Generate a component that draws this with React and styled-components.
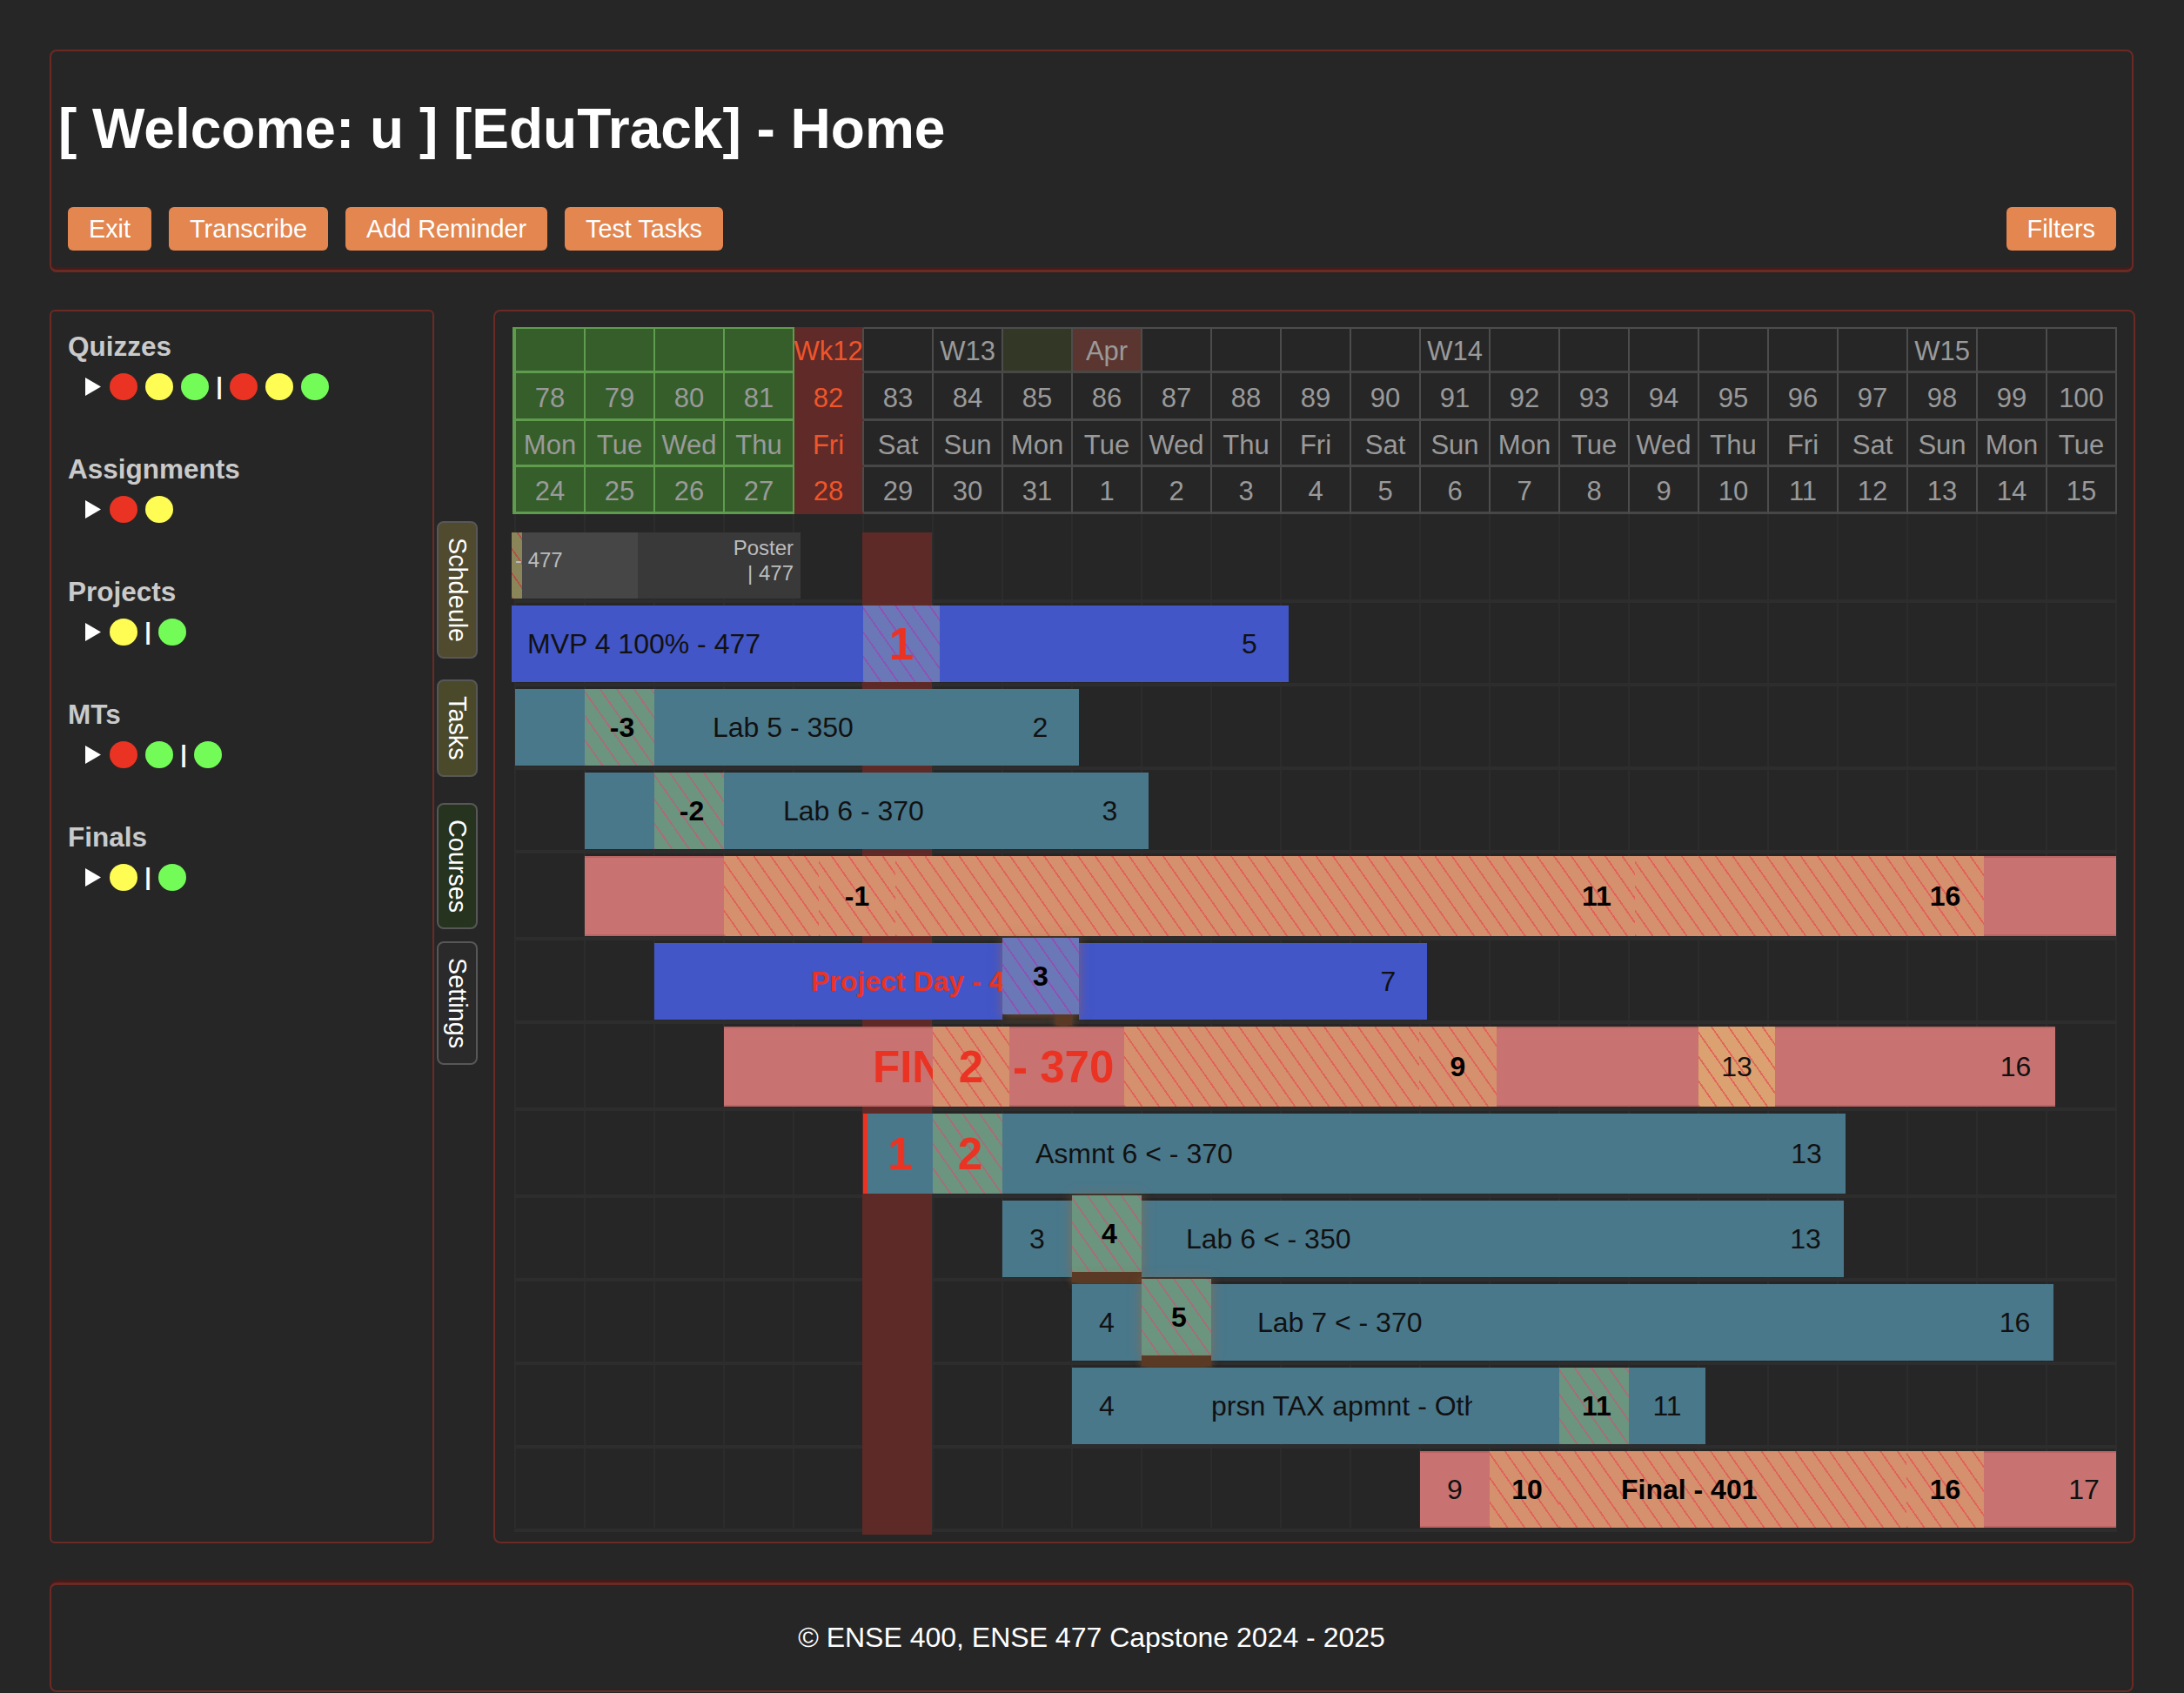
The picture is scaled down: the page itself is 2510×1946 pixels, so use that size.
import React from "react";
import styled, { createGlobalStyle, css } from "styled-components";

const RED = "#ea3323";
const FRAME = "#6b2a24";

const GlobalStyle = createGlobalStyle`
  html, body {
    margin: 0;
    padding: 0;
    background: #262626;
  }
  body {
    font-family: "Liberation Sans", Arial, Helvetica, sans-serif;
    color: #fff;
  }
`;

const Page = styled.div`
  box-sizing: border-box;
  padding: 57px 58px 0 57px;
`;

/* ---------- header ---------- */

const Header = styled.header`
  border: 2px solid ${FRAME};
  border-bottom-width: 3px;
  border-radius: 8px;
  box-shadow: inset 0 -3px 0 #451c1a;
  padding: 52px 18px 22px 8px;
`;

const Title = styled.h1`
  margin: 0;
  font-size: 64px;
  line-height: 74px;
  font-weight: 700;
  color: #fff;
`;

const Toolbar = styled.div`
  display: flex;
  gap: 20px;
  margin-top: 53px;
  padding-left: 11px;
`;

const Button = styled.button`
  height: 50px;
  padding: 0 24px;
  border: none;
  border-radius: 6px;
  background: #e38650;
  color: #fff;
  font-family: inherit;
  font-size: 28.8px;
  cursor: pointer;
  ${(p) =>
    p.$push &&
    css`
      margin-left: auto;
    `}
`;

/* ---------- layout ---------- */

const Main = styled.main`
  display: flex;
  align-items: stretch;
  margin-top: 43px;
`;

/* ---------- sidebar ---------- */

const Sidebar = styled.aside`
  box-sizing: border-box;
  flex: 0 0 442px;
  border: 2px solid ${FRAME};
  border-radius: 6px;
  padding: 22px 19px;
`;

const Group = styled.div`
  margin-bottom: 61px;
`;

const GroupTitle = styled.div`
  font-size: 31.5px;
  line-height: 36px;
  font-weight: 700;
  color: #cacaca;
`;

const DotRow = styled.div`
  display: flex;
  align-items: center;
  gap: 9px;
  height: 32px;
  margin: 12px 0 0 20px;
`;

const Arrow = styled.svg`
  width: 18px;
  height: 21px;
  margin-right: 1px;
`;

const DOT = { r: "#ea3323", y: "#fffd54", g: "#73fb58" };

const Dot = styled.span`
  width: 32px;
  height: 31px;
  border-radius: 50%;
  background: ${(p) => DOT[p.$c]};
`;

const Sep = styled.span`
  width: 8px;
  margin: 0 -1px;
  text-align: center;
  font-size: 27px;
  font-weight: 700;
  line-height: 32px;
  color: #fff;
`;

const groups = [
  { name: "Quizzes", dots: "ryg|ryg" },
  { name: "Assignments", dots: "ry" },
  { name: "Projects", dots: "y|g" },
  { name: "MTs", dots: "rg|g" },
  { name: "Finals", dots: "y|g" },
];

/* ---------- tabs ---------- */

const TabRail = styled.nav`
  flex: 0 0 47px;
  margin-left: 3px;
  padding-top: 243px;
  display: flex;
  flex-direction: column;
`;

const Tab = styled.div`
  box-sizing: border-box;
  width: 47px;
  margin-top: ${(p) => p.$gap}px;
  padding: 17px 0;
  writing-mode: vertical-rl;
  border: 2px solid #575757;
  border-radius: 8px;
  background: ${(p) => p.$bg};
  color: #fff;
  font-size: 28.8px;
  line-height: 43px;
  text-align: center;
  white-space: nowrap;
`;

const tabs = [
  { label: "Schdeule", bg: "#504a2e", gap: 0 },
  { label: "Tasks", bg: "#4a4a2b", gap: 24 },
  { label: "Courses", bg: "#25331f", gap: 30 },
  { label: "Settings", bg: "#2a2a2a", gap: 14 },
];

/* ---------- chart ---------- */

const ChartPanel = styled.section`
  flex: 1 1 auto;
  margin-left: 18px;
  border: 2px solid ${FRAME};
  border-radius: 8px;
  padding: 18px 19px 8px 22px;
`;

const HeadGrid = styled.div`
  display: grid;
  grid-template-columns: 84px repeat(22, 80px);
  grid-template-rows: 53px 55px 53px 54px;
  width: 1844px;
  margin-left: -2px;
`;

const HeadCell = styled.div`
  box-sizing: border-box;
  display: flex;
  align-items: center;
  justify-content: center;
  padding-top: 5px;
  font-size: 31px;
  color: #9a9a9a;
  white-space: nowrap;
  border-right: 2px solid #4c4c4c;
  border-bottom: 3px solid #474747;
  ${(p) =>
    p.$top &&
    css`
      border-top: 2px solid #4c4c4c;
      padding-top: 3px;
    `}
  ${(p) =>
    p.$tone === "green" &&
    css`
      background: #365e2b;
      border-color: #5f9c4e;
    `}
  ${(p) =>
    p.$first &&
    css`
      border-left: 4px solid #5f9c4e;
    `}
  ${(p) =>
    p.$tone === "today" &&
    css`
      background: #5f2a27;
      color: #f0552a;
      border-bottom-color: #5f2a27;
      border-top-color: #5f2a27;
    `}
  ${(p) =>
    p.$tone === "olive" &&
    css`
      background: #333826;
    `}
  ${(p) =>
    p.$tone === "brown" &&
    css`
      background: #5b352f;
    `}
`;

const DAYS = ["Mon", "Tue", "Wed", "Thu", "Fri", "Sat", "Sun"];
const DATES = [24, 25, 26, 27, 28, 29, 30, 31, 1, 2, 3, 4, 5, 6, 7, 8, 9, 10, 11, 12, 13, 14, 15];
const WEEKS = { 4: "Wk12", 6: "W13", 8: "Apr", 13: "W14", 20: "W15" };

const toneOf = (row, i) => {
  if (i < 4) return "green";
  if (i === 4) return "today";
  if (row === 0 && i === 7) return "olive";
  if (row === 0 && i === 8) return "brown";
  return null;
};

const Body = styled.div`
  position: relative;
  width: 1842px;
  padding-top: 21px;
  background-image: repeating-linear-gradient(
    to right,
    #2c2c2c 0 2px,
    transparent 2px 80px
  );
`;

const TodayColumn = styled.div`
  position: absolute;
  z-index: 1;
  left: 400px;
  width: 80px;
  top: 21px;
  bottom: -8px;
  background: #5e2a27;
`;

const Row = styled.div`
  position: relative;
  height: ${(p) => p.$h}px;
  margin-bottom: 8px;
  &::after {
    content: "";
    position: absolute;
    left: 0;
    right: 0;
    top: calc(100% + 1px);
    height: 4px;
    background: #2d2d2d;
  }
`;

const Bar = styled.div`
  position: relative;
  z-index: 2;
  display: flex;
  width: fit-content;
  height: 100%;
  margin-left: ${(p) => p.$x}px;
`;

const hatch = (bg, line) => css`
  background-color: ${bg};
  background-image: repeating-linear-gradient(
    55deg,
    ${line} 0 1.8px,
    transparent 1.8px 16px
  );
`;

const KINDS = {
  blue: css`
    background: #4256c8;
  `,
  teal: css`
    background: #4a788b;
  `,
  pink: css`
    background: #c87371;
    box-shadow: inset 0 2px 0 rgba(120, 40, 40, 0.18),
      inset 0 -2px 0 rgba(120, 40, 40, 0.18);
  `,
  hOrange: hatch("#d5906e", "#e0635b"),
  hLight: hatch("#dca170", "#e0675c"),
  hTeal: hatch("#6c957f", "#a66d78"),
  hBlue: hatch("#6a78b8", "#8d52b3"),
  hOlive: hatch("#8a8659", "#b0504a"),
  greyL: css`
    background: #464646;
  `,
  greyD: css`
    background: #393939;
  `,
};

const JUSTIFY = { center: "center", end: "flex-end", start: "flex-start" };

const Seg = styled.div`
  position: relative;
  box-sizing: border-box;
  flex: 0 0 auto;
  width: ${(p) => p.$w}px;
  display: flex;
  align-items: center;
  justify-content: ${(p) => JUSTIFY[p.$align || "start"]};
  padding-left: ${(p) => p.$pl || 0}px;
  padding-right: ${(p) => p.$pr || 0}px;
  overflow: ${(p) => (p.$clip ? "hidden" : "visible")};
  white-space: nowrap;
  ${(p) => KINDS[p.$kind]}
  ${(p) =>
    p.$redEdge &&
    css`
      border-left: 5px solid ${RED};
    `}
  ${(p) =>
    p.$raised &&
    css`
      z-index: 3;
      transform: translateY(-6px);
      box-shadow: 0 2px 12px rgba(176, 104, 44, 0.55);
      &::after {
        content: "";
        position: absolute;
        top: 100%;
        left: ${p.$stripL || 0}px;
        width: ${p.$stripW || p.$w}px;
        height: 12px;
        background: #5a3a24;
        box-shadow: 0 3px 8px rgba(176, 104, 44, 0.45);
      }
    `}
`;

const LABEL = {
  txt: css`
    font-size: 32px;
    color: #111;
  `,
  bold: css`
    font-size: 32px;
    font-weight: 700;
    color: #000;
  `,
  big: css`
    font-size: 51px;
    font-weight: 700;
    color: ${RED};
  `,
  redb: css`
    font-size: 32px;
    font-weight: 700;
    color: ${RED};
  `,
  small: css`
    font-size: 24px;
    line-height: 29px;
    color: #bcbcbc;
    text-align: right;
  `,
};

const Label = styled.span`
  position: relative;
  ${(p) => LABEL[p.$v || "txt"]}
  margin-left: ${(p) => p.$ml || 0}px;
  top: ${(p) => p.$dy || 0}px;
`;

const rows = [
  {
    h: 76,
    x: -3,
    segs: [
      { w: 12, k: "hOlive" },
      { w: 133, k: "greyL", l: { t: "- 477", v: "small", ml: -8, dy: -7 } },
      { w: 187, k: "greyD", a: "end", pr: 8, l: { t: ["Poster", "| 477"], v: "small", dy: -6 } },
    ],
  },
  {
    h: 88,
    x: -3,
    segs: [
      { w: 404, k: "blue", pl: 18, l: { t: "MVP 4 100% - 477" } },
      { w: 88, k: "hBlue", a: "center", l: { t: "1", v: "big" } },
      { w: 311, k: "blue" },
      { w: 90, k: "blue", a: "center", l: { t: "5" } },
    ],
  },
  {
    h: 88,
    x: 1,
    segs: [
      { w: 80, k: "teal" },
      { w: 80, k: "hTeal", a: "center", l: { t: "-3", v: "bold", ml: 6 } },
      { w: 399, k: "teal", pl: 67, l: { t: "Lab 5 - 350" } },
      { w: 89, k: "teal", a: "center", l: { t: "2" } },
    ],
  },
  {
    h: 88,
    x: 81,
    segs: [
      { w: 80, k: "teal" },
      { w: 80, k: "hTeal", a: "center", l: { t: "-2", v: "bold", ml: 6 } },
      { w: 399, k: "teal", pl: 68, l: { t: "Lab 6 - 370" } },
      { w: 89, k: "teal", a: "center", l: { t: "3" } },
    ],
  },
  {
    h: 92,
    x: 81,
    segs: [
      { w: 160, k: "pink" },
      { w: 109, k: "hOrange" },
      { w: 88, k: "hOrange", a: "center", l: { t: "-1", v: "bold" } },
      { w: 762, k: "hOrange" },
      { w: 88, k: "hOrange", a: "center", l: { t: "11", v: "bold" } },
      { w: 312, k: "hOrange" },
      { w: 89, k: "hOrange", a: "center", l: { t: "16", v: "bold" } },
      { w: 152, k: "pink" },
    ],
  },
  {
    h: 88,
    x: 161,
    segs: [
      { w: 400, k: "blue", pl: 180, clip: true, l: { t: "Project Day - 477", v: "redb" } },
      { w: 88, k: "hBlue", a: "center", raised: true, strip: [61, 19], l: { t: "3", v: "bold" } },
      { w: 311, k: "blue" },
      { w: 89, k: "blue", a: "center", l: { t: "7" } },
    ],
  },
  {
    h: 92,
    x: 241,
    segs: [
      { w: 240, k: "pink", pl: 171, clip: true, l: { t: "FINAL", v: "big" } },
      { w: 88, k: "hOrange", a: "center", l: { t: "2", v: "big" } },
      { w: 132, k: "pink", pl: 4, l: { t: "- 370", v: "big" } },
      { w: 339, k: "hOrange" },
      { w: 89, k: "hOrange", a: "center", l: { t: "9", v: "bold" } },
      { w: 232, k: "pink" },
      { w: 88, k: "hLight", a: "center", l: { t: "13" } },
      { w: 231, k: "pink" },
      { w: 91, k: "pink", a: "center", l: { t: "16" } },
    ],
  },
  {
    h: 92,
    x: 401,
    segs: [
      { w: 80, k: "teal", redEdge: true, a: "center", l: { t: "1", v: "big" } },
      { w: 80, k: "hTeal", a: "center", l: { t: "2", v: "big", ml: 6 } },
      { w: 879, k: "teal", pl: 38, l: { t: "Asmnt 6 < - 370" } },
      { w: 90, k: "teal", a: "center", l: { t: "13" } },
    ],
  },
  {
    h: 88,
    x: 561,
    segs: [
      { w: 80, k: "teal", a: "center", l: { t: "3" } },
      { w: 80, k: "hTeal", a: "center", raised: true, l: { t: "4", v: "bold", ml: 6 } },
      { w: 719, k: "teal", pl: 51, l: { t: "Lab 6 < - 350" } },
      { w: 88, k: "teal", a: "center", l: { t: "13" } },
    ],
  },
  {
    h: 88,
    x: 641,
    segs: [
      { w: 80, k: "teal", a: "center", l: { t: "4" } },
      { w: 80, k: "hTeal", a: "center", raised: true, l: { t: "5", v: "bold", ml: 6 } },
      { w: 879, k: "teal", pl: 53, l: { t: "Lab 7 < - 370" } },
      { w: 89, k: "teal", a: "center", l: { t: "16" } },
    ],
  },
  {
    h: 88,
    x: 641,
    segs: [
      { w: 80, k: "teal", a: "center", l: { t: "4" } },
      { w: 80, k: "teal" },
      { w: 300, k: "teal", clip: true, l: { t: "prsn TAX apmnt - Other" } },
      { w: 100, k: "teal" },
      { w: 80, k: "hTeal", a: "center", l: { t: "11", v: "bold", ml: 6 } },
      { w: 88, k: "teal", a: "center", l: { t: "11" } },
    ],
  },
  {
    h: 88,
    x: 1041,
    segs: [
      { w: 80, k: "pink", a: "center", l: { t: "9" } },
      { w: 80, k: "hOrange", a: "center", l: { t: "10", v: "bold", ml: 6 } },
      { w: 399, k: "hOrange", pl: 71, l: { t: "Final - 401", v: "bold" } },
      { w: 89, k: "hOrange", a: "center", l: { t: "16", v: "bold" } },
      { w: 71, k: "pink" },
      { w: 81, k: "pink", a: "center", l: { t: "17", ml: 7 } },
    ],
  },
];

/* ---------- footer ---------- */

const Footer = styled.footer`
  box-sizing: border-box;
  margin-top: 45px;
  height: 126px;
  border: 2px solid ${FRAME};
  border-top-width: 3px;
  border-radius: 8px;
  box-shadow: 0 -3px 0 #451c1a;
  display: flex;
  align-items: center;
  justify-content: center;
  font-size: 32px;
  color: #fff;
`;

const SegLabel = ({ l }) => {
  if (!l) return null;
  const text = Array.isArray(l.t)
    ? l.t.map((line, i) => (
        <React.Fragment key={i}>
          {i > 0 && <br />}
          {line}
        </React.Fragment>
      ))
    : l.t;
  return (
    <Label $v={l.v} $ml={l.ml} $dy={l.dy}>
      {text}
    </Label>
  );
};

const App = () => {
  return (
    <Page>
      <GlobalStyle />
      <Header>
        <Title>[ Welcome: u ] [EduTrack] - Home</Title>
        <Toolbar>
          <Button>Exit</Button>
          <Button>Transcribe</Button>
          <Button>Add Reminder</Button>
          <Button>Test Tasks</Button>
          <Button $push>Filters</Button>
        </Toolbar>
      </Header>

      <Main>
        <Sidebar>
          {groups.map((g) => (
            <Group key={g.name}>
              <GroupTitle>{g.name}</GroupTitle>
              <DotRow>
                <Arrow viewBox="0 0 18 21">
                  <polygon points="0,0 18,10.5 0,21" fill="#fff" />
                </Arrow>
                {g.dots.split("").map((c, i) =>
                  c === "|" ? <Sep key={i}>|</Sep> : <Dot key={i} $c={c} />
                )}
              </DotRow>
            </Group>
          ))}
        </Sidebar>

        <TabRail>
          {tabs.map((t) => (
            <Tab key={t.label} $bg={t.bg} $gap={t.gap}>
              {t.label}
            </Tab>
          ))}
        </TabRail>

        <ChartPanel>
          <HeadGrid>
            {[0, 1, 2, 3].map((r) =>
              DATES.map((d, i) => {
                let text = "";
                if (r === 0) text = WEEKS[i] || "";
                if (r === 1) text = 78 + i;
                if (r === 2) text = DAYS[i % 7];
                if (r === 3) text = d;
                return (
                  <HeadCell
                    key={`${r}-${i}`}
                    $top={r === 0}
                    $first={i === 0}
                    $tone={toneOf(r, i)}
                  >
                    {text}
                  </HeadCell>
                );
              })
            )}
          </HeadGrid>

          <Body>
            <TodayColumn />
            {rows.map((row, ri) => (
              <Row key={ri} $h={row.h}>
                <Bar $x={row.x}>
                  {row.segs.map((s, si) => (
                    <Seg
                      key={si}
                      $w={s.w}
                      $kind={s.k}
                      $align={s.a}
                      $pl={s.pl}
                      $pr={s.pr}
                      $clip={s.clip}
                      $redEdge={s.redEdge}
                      $raised={s.raised}
                      $stripL={s.strip && s.strip[0]}
                      $stripW={s.strip && s.strip[1]}
                    >
                      <SegLabel l={s.l} />
                    </Seg>
                  ))}
                </Bar>
              </Row>
            ))}
          </Body>
        </ChartPanel>
      </Main>

      <Footer>© ENSE 400, ENSE 477 Capstone 2024 - 2025</Footer>
    </Page>
  );
};

export default App;
